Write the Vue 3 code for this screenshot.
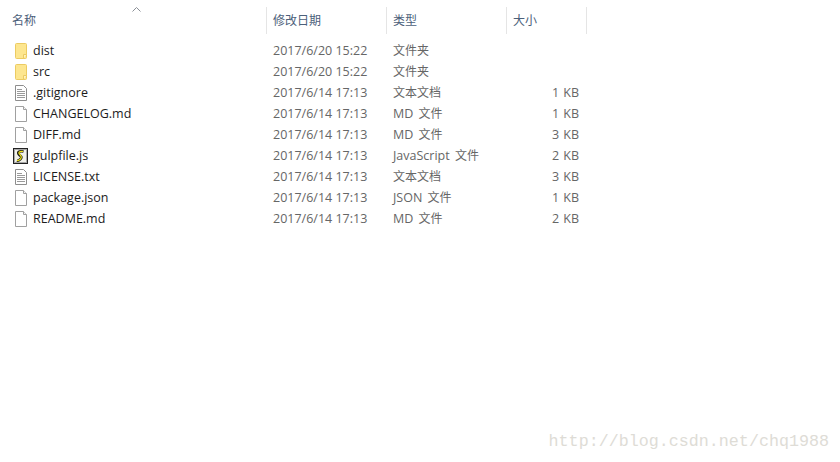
<template>
  <div class="explorer">
    <div class="sort-arrow">
      <svg width="9" height="5" viewBox="0 0 9 5" fill="none" stroke="#8a8f96">
        <polyline points="0.5 4.5 4.5 0.5 8.5 4.5"></polyline>
      </svg>
    </div>
    <div class="header">
      <div v-for="col in columns" :key="col.name" class="head-cell" :class="col.cls">{{ col.name }}</div>
    </div>
    <div class="rows">
      <div v-for="file in files" :key="file.name" class="row">
        <div class="cell-name">
          <span class="icon">
            <svg v-if="file.icon === 'folder'" width="16" height="16" viewBox="0 0 16 16">
              <rect x="3.5" y="0.5" width="11" height="15" rx="1" fill="#fde68f" stroke="#eccb62"></rect>
              <path d="M11.5 15.5v-4h3" fill="#fff3c4" stroke="#eccb62"></path>
            </svg>
            <svg v-else-if="file.icon === 'text'" width="16" height="16" viewBox="0 0 16 16">
              <path d="M3.5 0.5h8l3 3v12h-11z" fill="#fff" stroke="#8e8e8e"></path>
              <path d="M5 4.5h5M5 6.5h8M5 8.5h8M5 10.5h8M5 12.5h8" stroke="#9a9a9a"></path>
            </svg>
            <svg v-else-if="file.icon === 'js'" width="16" height="16" viewBox="0 0 16 16">
              <rect x="1.5" y="0.5" width="14" height="15" fill="#fff" stroke="#222"></rect>
              <rect x="2.5" y="1.5" width="12" height="13" fill="#f1f1ea" stroke="#a8a8a8"></rect>
              <path d="M11.5 3.5C7 2.5 5 4.5 7 6.5s3.5 2.5 1.5 4.5-3.5 1.5-3.5 1.5" fill="none" stroke="#1d1d12" stroke-width="2.6"></path>
              <path d="M11 3.5C7.5 3 6 4.5 7.5 6s3 3 1 5-3.5 1.5-3.5 1.5" fill="none" stroke="#efe21a" stroke-width="1.2"></path>
            </svg>
            <svg v-else width="16" height="16" viewBox="0 0 16 16">
              <path d="M3.5 0.5h8l3 3v12h-11z" fill="#fff" stroke="#a0a0a0"></path>
              <path d="M11.5 0.5v3h3" fill="#f4f4f4" stroke="#a0a0a0"></path>
            </svg>
          </span>
          <span class="file-name">{{ file.name }}</span>
        </div>
        <div class="cell cell-date">{{ file.date }}</div>
        <div class="cell cell-type">{{ file.latin }}<span class="cjk">{{ file.type }}</span></div>
        <div class="cell cell-size">{{ file.size }}</div>
      </div>
    </div>
    <div class="watermark">http://blog.csdn.net/chq1988</div>
  </div>
</template>

<script setup>
const columns = [
  { name: '名称', cls: 'col-name' },
  { name: '修改日期', cls: 'col-date' },
  { name: '类型', cls: 'col-type' },
  { name: '大小', cls: 'col-size' }
]

const files = [
  { name: 'dist', date: '2017/6/20 15:22', latin: '', type: '文件夹', size: '', icon: 'folder' },
  { name: 'src', date: '2017/6/20 15:22', latin: '', type: '文件夹', size: '', icon: 'folder' },
  { name: '.gitignore', date: '2017/6/14 17:13', latin: '', type: '文本文档', size: '1 KB', icon: 'text' },
  { name: 'CHANGELOG.md', date: '2017/6/14 17:13', latin: 'MD ', type: '文件', size: '1 KB', icon: 'file' },
  { name: 'DIFF.md', date: '2017/6/14 17:13', latin: 'MD ', type: '文件', size: '3 KB', icon: 'file' },
  { name: 'gulpfile.js', date: '2017/6/14 17:13', latin: 'JavaScript ', type: '文件', size: '2 KB', icon: 'js' },
  { name: 'LICENSE.txt', date: '2017/6/14 17:13', latin: '', type: '文本文档', size: '3 KB', icon: 'text' },
  { name: 'package.json', date: '2017/6/14 17:13', latin: 'JSON ', type: '文件', size: '1 KB', icon: 'file' },
  { name: 'README.md', date: '2017/6/14 17:13', latin: 'MD ', type: '文件', size: '2 KB', icon: 'file' }
]
</script>

<style scoped>
.explorer {
  position: relative;
  width: 840px;
  height: 462px;
  overflow: hidden;
  background: #fff;
  font-family: "Open Sans", "Noto Sans CJK SC", sans-serif;
  font-size: 12.5px;
}

.sort-arrow {
  position: absolute;
  left: 132px;
  top: 7px;
  line-height: 0;
}

.header {
  display: flex;
  padding-top: 7px;
  height: 27px;
}

.head-cell {
  box-sizing: border-box;
  height: 27px;
  line-height: 27px;
  padding-left: 6px;
  border-right: 1px solid #e5e5e5;
  color: #4c607a;
  font-size: 12px;
}

.col-name {
  width: 267px;
  padding-left: 12px;
}

.col-date,
.col-type {
  width: 120px;
}

.col-size {
  width: 80px;
}

.rows {
  margin-top: 6px;
}

.row {
  display: flex;
  height: 21px;
  line-height: 21px;
}

.cell-name {
  display: flex;
  align-items: center;
  width: 267px;
  padding-left: 12px;
  box-sizing: border-box;
  color: #1c1c1c;
}

.icon {
  width: 21px;
  height: 16px;
  line-height: 0;
  flex-shrink: 0;
}

.cell {
  box-sizing: border-box;
  color: #666;
}

.cjk {
  font-size: 12px;
}

.cell-date,
.cell-type {
  width: 120px;
  padding-left: 6px;
}

.cell-type {
  word-spacing: 2px;
}

.cell-size {
  width: 80px;
  padding-right: 8px;
  text-align: right;
  word-spacing: 1px;
}

.watermark {
  position: absolute;
  right: 11px;
  top: 432px;
  font-family: "Liberation Mono", monospace;
  font-size: 16.7px;
  line-height: 20px;
  color: #dedcd6;
  white-space: nowrap;
}
</style>
